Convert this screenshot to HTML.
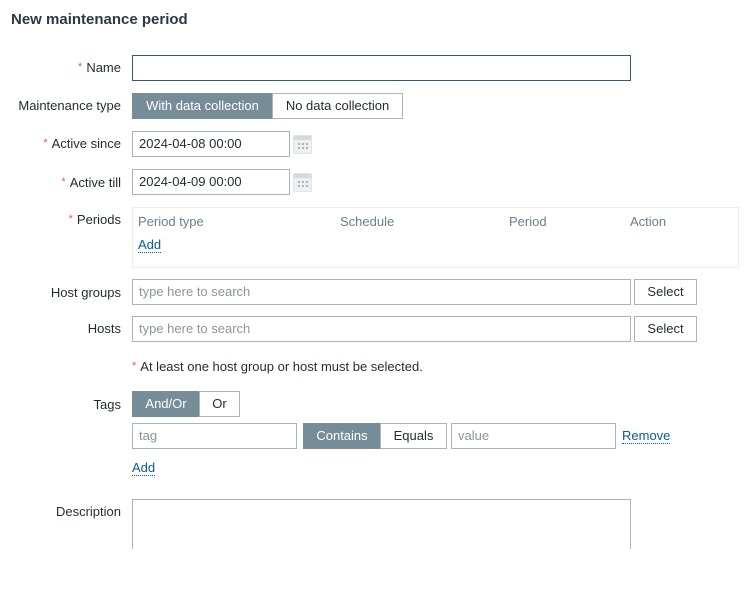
<!DOCTYPE html>
<html><head><meta charset="utf-8"><style>
body{margin:0;width:749px;height:595px;background:#fff;font-family:"Liberation Sans",Arial,sans-serif;font-size:13px;color:#1f2c33;position:relative;overflow:hidden}
.a{position:absolute}
.lbl{position:absolute;right:628px;text-align:right;white-space:nowrap}
.req{color:#e45959;font-size:11px;margin-right:4px;position:relative;top:-2px}
.in{position:absolute;box-sizing:border-box;border:1px solid #acb4b8;background:#fff;height:26px;line-height:24px;padding-left:6px;color:#1f2c33}
.ph{color:#8c959a}
.seg{position:absolute;box-sizing:border-box;border:1px solid #acb4b8;height:26px;line-height:24px;text-align:center;background:#fff}
.on{background:#768d99;border-color:#768d99;color:#fff}
.link{color:#0a5b9a;border-bottom:1px dotted #0a5b9a;line-height:14px}
.hd{color:#69808d;position:absolute;top:214px}
.cal{position:absolute;width:19px;height:19px;box-sizing:border-box;border:1px solid #dfe4e7;background:#eef1f3;border-radius:2px}
.cal i{position:absolute;left:0;right:0;top:0;height:4px;background:#d4dadd}
.cal b{position:absolute;width:2px;height:2px;background:#aab3b8}
</style></head><body>
<div class="a" style="left:11px;top:11px;font-size:15px;font-weight:bold;color:#2b3a42">New maintenance period</div>

<div class="lbl" style="top:60px"><span class="req">*</span>Name</div>
<div class="in" style="left:132px;top:55px;width:499px;height:26px;border-color:#2f5a7e"></div>

<div class="lbl" style="top:98px">Maintenance type</div>
<div class="seg on" style="left:132px;top:93px;width:141px">With data collection</div>
<div class="seg" style="left:272px;top:93px;width:131px">No data collection</div>

<div class="lbl" style="top:136px"><span class="req">*</span>Active since</div>
<div class="in" style="left:132px;top:131px;width:158px">2024-04-08 00:00</div>
<div class="cal" style="left:293px;top:135px"><i></i><b style="left:4px;top:7px"></b><b style="left:8px;top:7px"></b><b style="left:12px;top:7px"></b><b style="left:4px;top:11px"></b><b style="left:8px;top:11px"></b><b style="left:12px;top:11px"></b></div>

<div class="lbl" style="top:175px"><span class="req">*</span>Active till</div>
<div class="in" style="left:132px;top:169px;width:158px">2024-04-09 00:00</div>
<div class="cal" style="left:293px;top:173px"><i></i><b style="left:4px;top:7px"></b><b style="left:8px;top:7px"></b><b style="left:12px;top:7px"></b><b style="left:4px;top:11px"></b><b style="left:8px;top:11px"></b><b style="left:12px;top:11px"></b></div>

<div class="lbl" style="top:212px"><span class="req">*</span>Periods</div>
<div class="a" style="left:132px;top:207px;width:607px;height:61px;box-sizing:border-box;border:1px solid #ebeef0"></div>
<div class="hd" style="left:138px">Period type</div>
<div class="hd" style="left:340px">Schedule</div>
<div class="hd" style="left:509px">Period</div>
<div class="hd" style="left:630px">Action</div>
<div class="a link" style="left:138px;top:238px">Add</div>

<div class="lbl" style="top:285px">Host groups</div>
<div class="in ph" style="left:132px;top:279px;width:499px">type here to search</div>
<div class="seg" style="left:634px;top:279px;width:63px">Select</div>

<div class="lbl" style="top:321px">Hosts</div>
<div class="in ph" style="left:132px;top:316px;width:499px">type here to search</div>
<div class="seg" style="left:634px;top:316px;width:63px">Select</div>

<div class="a" style="left:132px;top:359px"><span class="req">*</span>At least one host group or host must be selected.</div>

<div class="lbl" style="top:397px">Tags</div>
<div class="seg on" style="left:132px;top:391px;width:68px">And/Or</div>
<div class="seg" style="left:199px;top:391px;width:41px">Or</div>

<div class="in ph" style="left:132px;top:423px;width:165px">tag</div>
<div class="seg on" style="left:303px;top:423px;width:78px">Contains</div>
<div class="seg" style="left:380px;top:423px;width:67px">Equals</div>
<div class="in ph" style="left:451px;top:423px;width:165px">value</div>
<div class="a link" style="left:622px;top:429px">Remove</div>
<div class="a link" style="left:132px;top:461px">Add</div>

<div class="lbl" style="top:504px">Description</div>
<div class="a" style="left:132px;top:499px;width:499px;height:50px;box-sizing:border-box;border:1px solid #acb4b8;border-bottom:none"></div>
</body></html>
